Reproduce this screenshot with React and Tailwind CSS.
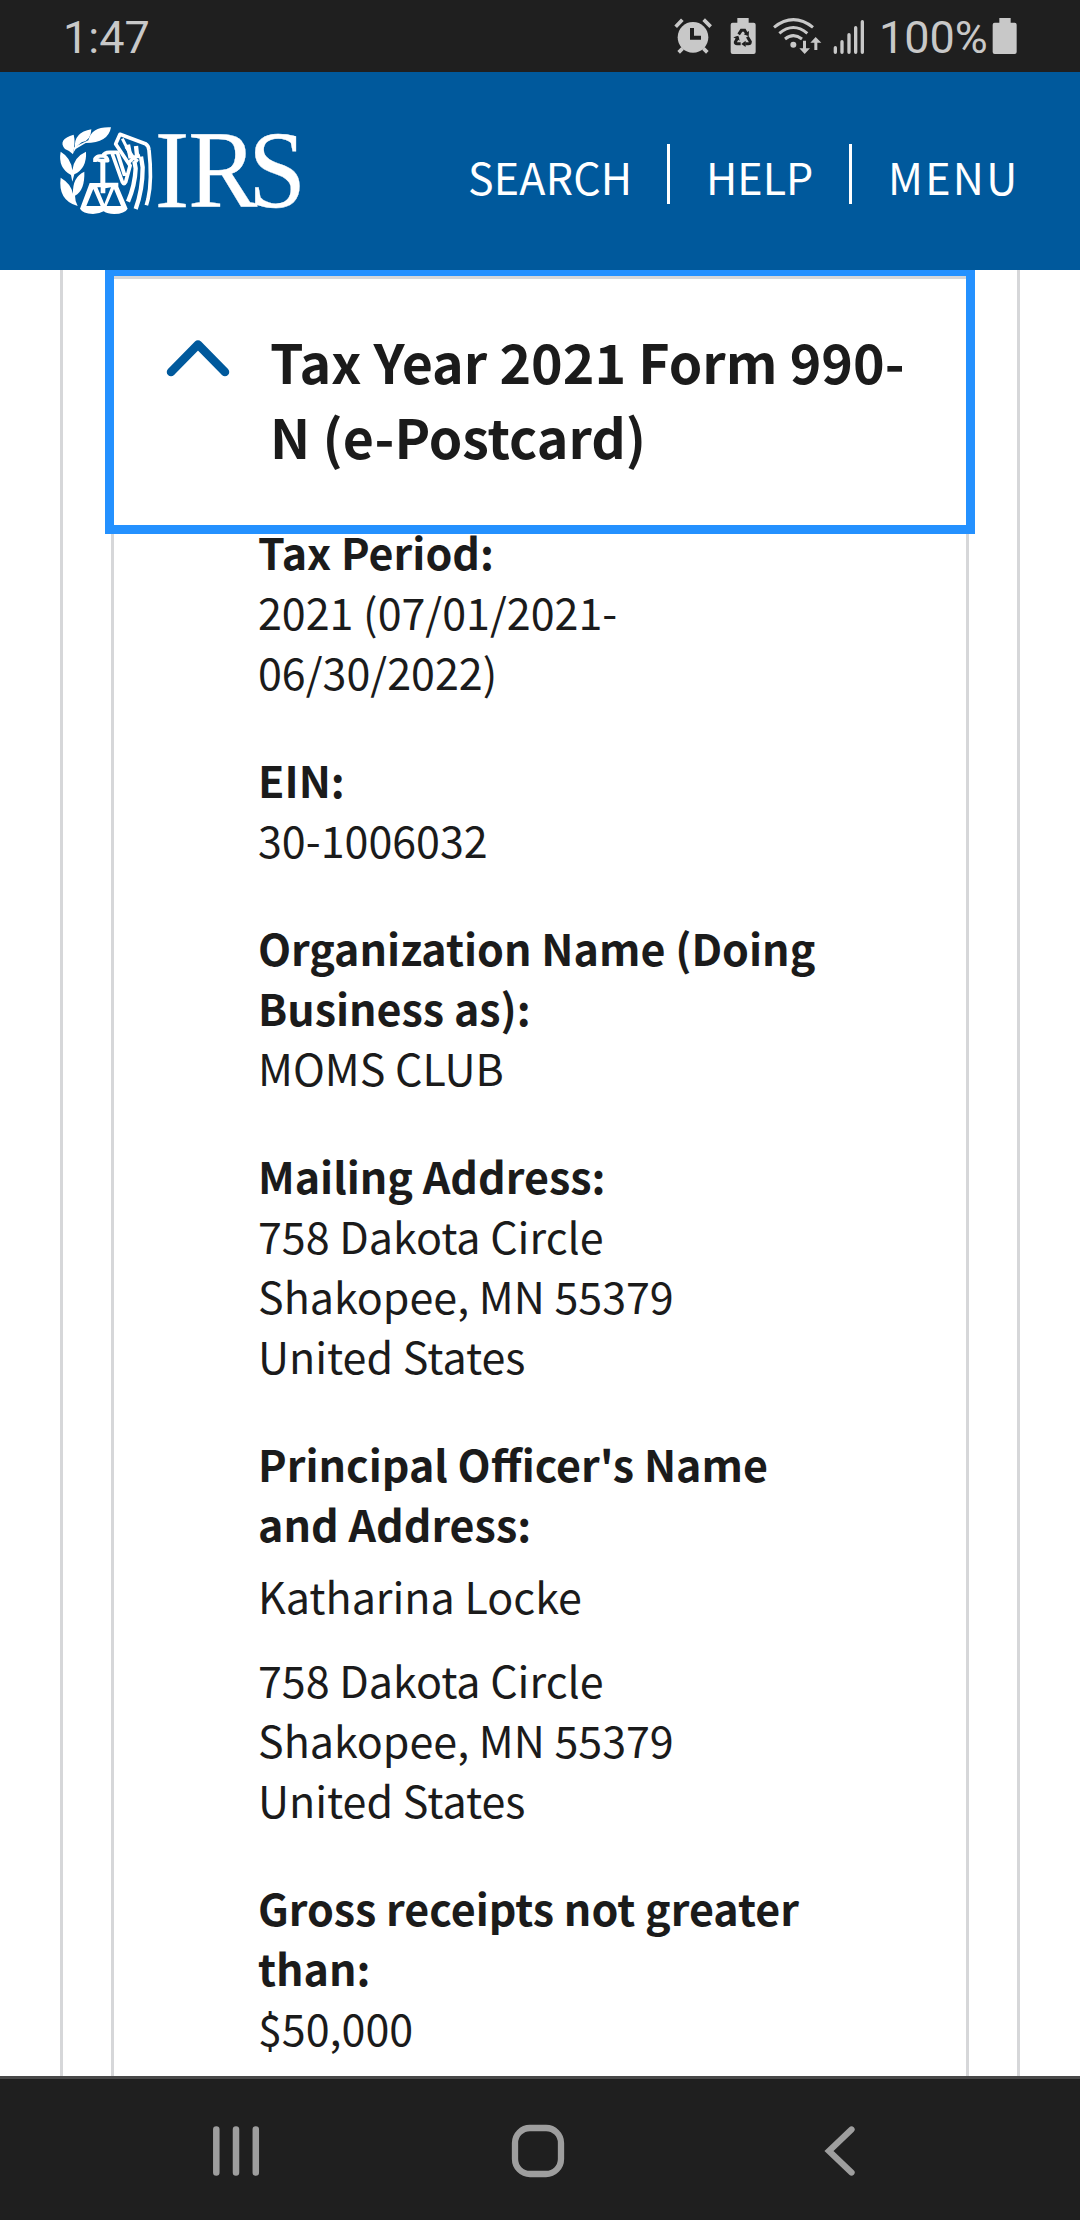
const SANS = "font-['Noto_Sans_CJK_SC','Open_Sans',sans-serif]";

function StatusBar() {
  return (
    <div className="flex h-[72px] items-start bg-[#1f1f1f] font-['Roboto',sans-serif] text-[45px] leading-[76px] text-[#c8c8c8]">
      <span className="pl-[63px]">1:47</span>
      <svg className="ml-auto h-[72px] w-[206px] shrink-0" viewBox="90 0 618 216" fill="#c8c8c8">
        {/* alarm */}
        <circle cx="156" cy="112" r="46" />
        <path d="M104 80 124 59M188 59 209 80M113 157 125 145M187 145 199 157" stroke="#c8c8c8" strokeWidth="11" />
        <path d="M147 84h12v23h21v12h-33z" fill="#1f1f1f" />
        {/* power saving battery */}
        <path d="M289 54h34v14h15q6 0 6 6v82q0 6-6 6h-63q-6 0-6-6V74q0-6 6-6h14z" />
        <g fill="none" stroke="#1f1f1f" strokeWidth="9">
          <path d="m293 103 8-12h10l6 10M291 112l-8 14q-1 5 5 5h11M319 110l9 15q0 6-6 6h-9" />
        </g>
        <path d="m324 93-1 16-15-6zM277 112l15-5 4 15zM314 122v19l-13-9z" fill="#1f1f1f" />
        {/* wifi */}
        <g fill="none" stroke="#c8c8c8" strokeWidth="9">
          <path d="M399 82Q457 36 516 82M415 100Q457 65 499 100M432 117Q457 97 483 117" />
        </g>
        <circle cx="457" cy="134" r="9" />
        <path d="M486 122h9v23h12l-16 17-16-17h11zM520 150h9v-22h12l-17-17-16 17h12z" />
        {/* signal */}
        <path d="M583 143v14M603 125v32M624 104v53M644 83v74M664 65v92" stroke="#c8c8c8" strokeWidth="10" strokeLinecap="round" />
      </svg>
      <span className="ml-[2px] w-[113px]">100%</span>
      <svg className="mr-[62px] h-[72px] w-[26px] shrink-0" viewBox="0 0 78 216" fill="#c8c8c8">
        <path d="M22 54h34v14h12q6 0 6 6v82q0 6-6 6H8q-6 0-6-6V74q0-6 6-6h14z" />
      </svg>
    </div>
  );
}

function Logo() {
  return (
    <svg className="h-[120px] w-[280px] shrink-0" viewBox="0 0 840 360" fill="#fff">
      {/* laurel branch */}
      <g transform="translate(45 45)">
        <path d="M168 7Q110 4 100 46L58 66 54 85 62 72 92 54Q160 54 168 7Z" />
        <path d="M109 13Q56 22 60 68L80 52Q108 48 109 13Z" />
        <path d="M56 29Q6 44 30 72 46 78 54 88 62 50 56 29Z" />
        <path d="M17 80Q48 98 52 136 56 96 93 80 96 130 58 148L52 170 48 150Q8 128 17 80Z" />
        <path d="M17 158Q48 176 54 206 52 156 88 140 90 196 60 212 60 228 68 243 8 226 17 158Z" />
      </g>
      {/* eagle head and wing */}
      <g fill="none" stroke="#fff" strokeWidth="11" strokeLinejoin="round" strokeLinecap="butt">
        <path d="M165 156V147Q170 138 180 138H192Q202 142 203 152H184L166 148M188 138Q193 127 208 127H232L254 196M217 132 247 216Q252 226 257 216L271 164" />
        <path d="M271 168 227 102 240 73 316 101Q326 107 327 120 337 210 324 268L319 286" />
        <path d="m247 86 27 54" strokeWidth="9" />
        <path d="M264 104 272 145M288 108 292 145M283 153 287 175Q285 225 264 275M303 140 308 172Q308 240 287 297" strokeWidth="13" />
        <path d="m258 110 22 32 20-6M264 160l16-16 14 10" strokeWidth="10" />
      </g>
      {/* scales */}
      <path d="M181 154h15v64h39v12l28 66q-8 15-41 16-19 0-31-8-14 8-32 8-31-2-39-16l29-77h32zM160 237l-21 51h43zM222 237l-22 51h43zM172 232l21 50 20-50-17 3v15h-14v-18z" fillRule="evenodd" />
      <g transform="translate(0 290) scale(.94 1)" fontFamily="Liberation Serif, serif" fontSize="331" stroke="#fff" strokeWidth="1">
        <text x="366 473 665">IRS</text>
      </g>
    </svg>
  );
}

function Header() {
  return (
    <header className={`flex h-[198px] items-start bg-[#00599c] text-[43px] leading-[60px] text-white ${SANS}`}>
      <div className="mt-[38px] ml-[40px] w-[280px]"><Logo /></div>
      <nav className="mt-[72px] ml-[148px] flex whitespace-nowrap">
        <span className="w-[199px] pt-[2px] tracking-[0.2px]">SEARCH</span>
        <span className="h-[60px] w-[3px] bg-white" />
        <span className="w-[179px] pt-[2px] pl-[36px]">HELP</span>
        <span className="h-[60px] w-[3px] bg-white" />
        <span className="pt-[2px] pl-[36px] tracking-[2.3px]">MENU</span>
      </nav>
    </header>
  );
}

function Field({ label, lines }) {
  return (
    <section className="mb-12">
      <h3 className="font-bold">{label.map((l) => <div key={l}>{l}</div>)}</h3>
      {lines.map((l) => <p key={l}>{l}</p>)}
    </section>
  );
}

function NavBar() {
  return (
    <footer className="flex h-[144px] items-start border-t-[3px] border-[#484848] bg-[#1f1f1f]">
      <svg className="mt-[43px] ml-[206px] h-[60px] w-[60px]" viewBox="206 2122 60 60" stroke="#9e9e9e" strokeWidth="6.5" strokeLinecap="round">
        <path d="M216.3 2129.5v43M236 2129.5v43M255.8 2129.5v43" />
      </svg>
      <svg className="mt-[43px] ml-[242px] h-[60px] w-[60px]" viewBox="508 2122 60 60" fill="none" stroke="#9e9e9e" strokeWidth="6.3">
        <rect x="515" y="2128" width="46" height="46" rx="15" />
      </svg>
      <svg className="mt-[43px] ml-[252px] h-[60px] w-[60px]" viewBox="820 2122 60 60" fill="none" stroke="#9e9e9e" strokeWidth="6.3" strokeLinecap="round">
        <path d="M851.5 2129.5 829 2151l22.500 21.500" />
      </svg>
    </footer>
  );
}

export default function App() {
  return (
    <div className="flex h-[2220px] w-[1080px] flex-col overflow-hidden bg-white">
      <StatusBar />
      <Header />
      <main className={`mx-[60px] h-[1806px] border-x-[3px] border-[#d6d7d9] text-[#1b1b1b] ${SANS}`}>
        <div className="ml-[48px] h-full w-[858px] border-x-[3px] border-[#d6d7d9]">
          <button className="relative -mx-[9px] flex h-[264px] w-[870px] items-start border-[9px] border-t-[6px] border-[#2491ff] bg-white text-left">
            <span className="flex h-[249px] w-full border-t-[3px] border-[#d6d7d9]">
              <svg className="mt-[56px] ml-[48px] h-[48px] w-[72px] shrink-0" viewBox="162 335 72 48" fill="none" stroke="#00599c" strokeWidth="8.500" strokeLinecap="round" strokeLinejoin="round">
                <path d="M171 372 198 344.500 225 372" />
              </svg>
              <span className="mt-[44px] ml-[36px] text-[53.7px] leading-[75px] font-bold whitespace-nowrap">
                Tax Year 2021 Form 990-<br />N (e-Postcard)
              </span>
            </span>
          </button>
          <div className="relative -mt-[13px] ml-[144px] text-[43px] leading-[60px] whitespace-nowrap">
            <Field label={["Tax Period:"]} lines={["2021 (07/01/2021-", "06/30/2022)"]} />
            <Field label={["EIN:"]} lines={["30-1006032"]} />
            <Field label={["Organization Name (Doing", "Business as):"]} lines={["MOMS CLUB"]} />
            <Field label={["Mailing Address:"]} lines={["758 Dakota Circle", "Shakopee, MN 55379", "United States"]} />
            <h3 className="font-bold">Principal Officer's Name<br />and Address:</h3>
            <p className="mt-3 mb-6">Katharina Locke</p>
            <Field label={[]} lines={["758 Dakota Circle", "Shakopee, MN 55379", "United States"]} />
            <Field label={["Gross receipts not greater", "than:"]} lines={["$50,000"]} />
          </div>
        </div>
      </main>
      <NavBar />
    </div>
  );
}
